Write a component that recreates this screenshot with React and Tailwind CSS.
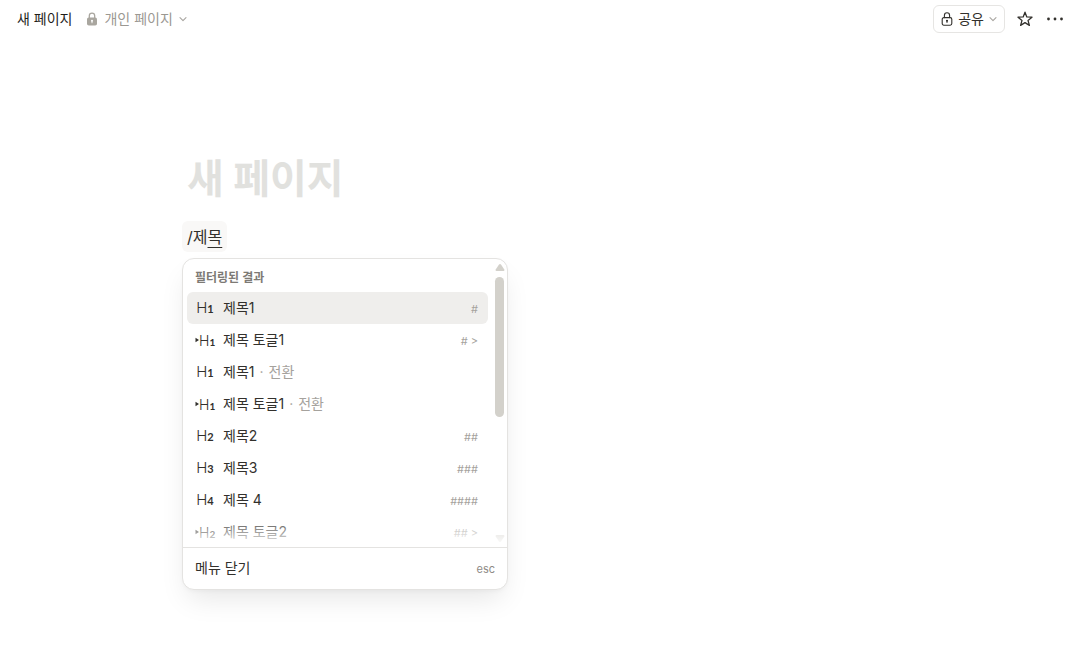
import { useState } from "react";

const items = [
  { label: "제목1", level: "1", hint: "#" },
  { label: "제목 토글1", level: "1", toggle: true, hint: "# >" },
  { label: "제목1", level: "1", note: "전환" },
  { label: "제목 토글1", level: "1", toggle: true, note: "전환" },
  { label: "제목2", level: "2", hint: "##" },
  { label: "제목3", level: "3", hint: "###" },
  { label: "제목 4", level: "4", hint: "####" },
  { label: "제목 토글2", level: "2", toggle: true, hint: "## >" },
];

function Chevron() {
  return (
    <svg className="w-2 h-2" viewBox="0 0 8 8" fill="none" stroke="#a8a5a0" strokeWidth="1.1" strokeLinecap="round" strokeLinejoin="round">
      <path d="M1 2.7 4 5.7 7 2.7" />
    </svg>
  );
}

function LockFilled() {
  return (
    <svg className="w-3 h-3.5" viewBox="0 0 12 14">
      <path d="M3.3 6V3.8a2.7 2.7 0 0 1 5.4 0v2.2" fill="none" stroke="#a9a69f" strokeWidth="1.3" />
      <rect x="1" y="5.5" width="10" height="8" rx="1.8" fill="#a9a69f" />
      <circle cx="6" cy="8.8" r="1" fill="#fff" />
      <path d="M6 9v1.8" stroke="#fff" strokeWidth="0.9" strokeLinecap="round" />
    </svg>
  );
}

function LockOutline() {
  return (
    <svg className="w-3 h-3.5" viewBox="0 0 12 14" fill="none" stroke="#32302c" strokeWidth="1.1" strokeLinecap="round">
      <path d="M3.4 5.6V3.4a2.6 2.6 0 0 1 5.2 0v2.2" />
      <rect x="1.2" y="5.6" width="9.6" height="7.6" rx="1.6" />
      <circle cx="6" cy="8.7" r="0.5" fill="#32302c" />
      <path d="M6 9v1.6" strokeWidth="0.9" />
    </svg>
  );
}

function Star() {
  return (
    <svg className="w-4 h-4" viewBox="0 0 16 16" fill="none" stroke="#32302c" strokeWidth="1.3" strokeLinejoin="round">
      <path d="M8 1.2 9.8 5.9 15 6.2 11 9.4 12.4 14.4 8 11.6 3.6 14.4 5 9.4 1 6.2 6.2 5.9Z" />
    </svg>
  );
}

function Dots() {
  return (
    <svg className="w-4 h-4" viewBox="0 0 16 16" fill="#32302c">
      <circle cx="1.5" cy="8" r="1.4" />
      <circle cx="8" cy="8" r="1.4" />
      <circle cx="14.5" cy="8" r="1.4" />
    </svg>
  );
}

function HeadingIcon({ level, toggle }) {
  return (
    <span className={`flex w-5 items-center text-[#32302c] ${toggle ? "" : "justify-center"}`} aria-hidden="true">
      {toggle && (
        <svg className="w-1 h-1.5 shrink-0" viewBox="0 0 4 6" fill="currentColor">
          <path d="M.5 .8v4.4L4 3z" />
        </svg>
      )}
      <span className="flex items-baseline">
        <span className={toggle ? "text-[14px] font-light" : "text-[15px] font-light"}>H</span>
        <span className={toggle ? "font-[Lato,sans-serif] text-[10px] font-bold" : "font-[Lato,sans-serif] text-[11px] font-bold"}>{level}</span>
      </span>
    </span>
  );
}

function MenuItem({ item, active, onHover }) {
  return (
    <button
      type="button"
      onMouseEnter={onHover}
      className={`flex h-8 w-full shrink-0 items-center rounded-md pl-2 pr-2.5 text-left ${active ? "bg-[#efeeec]" : ""}`}
    >
      <HeadingIcon level={item.level} toggle={item.toggle} />
      <span className="ml-2 flex-1 text-sm text-[#32302c]">
        {item.label}
        {item.note && (
          <span className="text-[#a5a29d]">
            <span className="mx-[5px]">·</span>
            {item.note}
          </span>
        )}
      </span>
      <span className="pt-0.5 text-[11px] text-[#a5a29d]">{item.hint}</span>
    </button>
  );
}

export default function App() {
  const [active, setActive] = useState(0);

  return (
    <div className="min-h-screen bg-white font-[Inter,'Noto_Sans_CJK_KR',sans-serif] text-[#32302c]">
      {/* Top bar */}
      <header className="flex h-10 items-center justify-between pb-0.5 pl-[17px] pr-[11px] text-sm">
        <div className="flex items-center gap-3.5">
          <span className="text-[#1f1e1b]">새 페이지</span>
          <button type="button" className="flex items-center gap-1.5 text-[#9b9892]">
            <LockFilled />
            개인 페이지
            <Chevron />
          </button>
        </div>
        <div className="flex items-center">
          <button type="button" className="mr-3 flex h-7 items-center gap-[5px] rounded-md border border-[#e6e5e3] px-[7px]">
            <LockOutline />
            공유
            <Chevron />
          </button>
          <button type="button" aria-label="즐겨찾기" className="mr-3.5">
            <Star />
          </button>
          <button type="button" aria-label="더 보기">
            <Dots />
          </button>
        </div>
      </header>

      <main className="px-[182px] pt-[115px]">
        <h1 className="px-[5px] text-[40px] leading-[48px] font-bold text-[#e1e1de]">새 페이지</h1>

        <div className="mt-[18px] flex">
          <p className="rounded-md bg-[#f9f8f7] px-[5px] pt-px text-base leading-[30px]">
            /제<span className="underline underline-offset-4">목</span>
          </p>
        </div>

        {/* Slash command menu */}
        <div className="mt-1.5 w-[326px] rounded-xl border border-[#e4e3e1] bg-white shadow-[0_14px_28px_-6px_rgba(0,0,0,0.1),0_2px_4px_-1px_rgba(0,0,0,0.04)]">
          <div className="relative flex h-72 overflow-hidden">
            <div className="flex flex-1 flex-col px-1 pt-1">
              <div className="flex h-[29px] shrink-0 items-center px-2 text-xs font-semibold text-[#7d7a75]">필터링된 결과</div>
              {items.map((item, i) => (
                <MenuItem key={i} item={item} active={i === active} onHover={() => setActive(i)} />
              ))}
            </div>
            <div className="flex w-[15px] flex-col items-center justify-between pt-1 pb-1">
              <svg className="w-2.5 h-2.5" viewBox="0 0 10 10" fill="#d3d1cb">
                <path d="M4 1.4Q5 .4 6 1.4L9.3 6.4Q9.8 8 8.5 8H1.5Q.2 8 .7 6.4Z" />
              </svg>
              <div className="mt-1 h-[140px] w-[9px] rounded-full bg-[#d3d1cb]" />
              <svg className="mt-auto w-2.5 h-2.5" viewBox="0 0 10 10" fill="#d3d1cb">
                <path d="M4 8.6Q5 9.6 6 8.6L9.3 3.6Q9.8 2 8.5 2H1.5Q.2 2 .7 3.6Z" />
              </svg>
            </div>
            <div className="pointer-events-none absolute inset-x-0 bottom-0 h-8 bg-linear-to-t from-white to-transparent" />
          </div>
          <button type="button" className="flex h-[42px] w-full items-center justify-between border-t border-[#e4e3e1] px-3 pb-0.5 text-sm">
            메뉴 닫기
            <span className="pt-1 text-[11px] text-[#8e8b86]">esc</span>
          </button>
        </div>
      </main>
    </div>
  );
}
